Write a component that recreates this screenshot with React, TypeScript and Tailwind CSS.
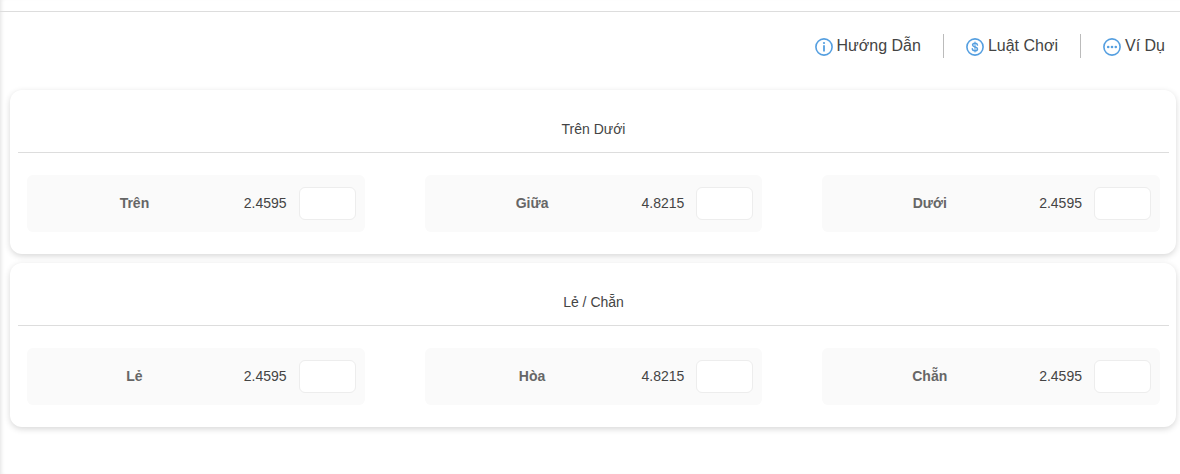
import { useState } from "react";
import type { ReactNode } from "react";

interface Bet {
  id: string;
  label: string;
  odds: string;
}

interface BetGroup {
  title: string;
  bets: Bet[];
}

const groups: BetGroup[] = [
  {
    title: "Trên Dưới",
    bets: [
      { id: "top", label: "Trên", odds: "2.4595" },
      { id: "middle", label: "Giữa", odds: "4.8215" },
      { id: "bottom", label: "Dưới", odds: "2.4595" },
    ],
  },
  {
    title: "Lẻ / Chẵn",
    bets: [
      { id: "odd", label: "Lẻ", odds: "2.4595" },
      { id: "tie", label: "Hòa", odds: "4.8215" },
      { id: "even", label: "Chẵn", odds: "2.4595" },
    ],
  },
];

function CircleIcon({ children }: { children: ReactNode }) {
  return (
    <svg
      className="mt-0.5 h-[18px] w-[18px] shrink-0 text-[#559fe0]"
      viewBox="0 0 18 18"
      fill="none"
      stroke="currentColor"
      strokeLinecap="round"
      strokeLinejoin="round"
      aria-hidden="true"
    >
      <circle cx="9" cy="9" r="8.1" strokeWidth="1.6" />
      {children}
    </svg>
  );
}

const links = [
  {
    label: "Hướng Dẫn",
    icon: (
      <CircleIcon>
        <circle cx="9" cy="5" r="1.1" fill="currentColor" stroke="none" />
        <path d="M9 7.2v6.3" strokeWidth="1.8" strokeLinecap="butt" />
      </CircleIcon>
    ),
  },
  {
    label: "Luật Chơi",
    icon: (
      <CircleIcon>
        <path
          d="M11.5 7.1C11.3 5.9 10.3 5.3 9 5.3c-1.4 0-2.4.7-2.4 1.8 0 2.5 4.9 1.3 4.9 3.8 0 1.1-1.1 1.8-2.5 1.8-1.5 0-2.5-.7-2.7-1.9"
          strokeWidth="1.5"
        />
        <path d="M9 4v10" strokeWidth="1" />
      </CircleIcon>
    ),
  },
  {
    label: "Ví Dụ",
    icon: (
      <CircleIcon>
        <g fill="currentColor" stroke="none">
          <circle cx="5.2" cy="9" r="1.3" />
          <circle cx="9" cy="9" r="1.3" />
          <circle cx="12.8" cy="9" r="1.3" />
        </g>
      </CircleIcon>
    ),
  },
];

function BetCell({ bet }: { bet: Bet }) {
  const [amount, setAmount] = useState("");

  return (
    <div className="flex items-center rounded-md bg-[#fafafa] py-3 pr-[9px]">
      <label
        htmlFor={bet.id}
        className="flex-1 pr-0.5 pb-0.5 text-center text-sm leading-5 font-bold text-[#666]"
      >
        {bet.label}
      </label>
      <span className="mr-3 pb-0.5 text-sm leading-5 text-[#444]">{bet.odds}</span>
      <input
        id={bet.id}
        type="text"
        inputMode="numeric"
        value={amount}
        onChange={(e) => setAmount(e.target.value)}
        className="h-[33px] w-[57px] rounded-md border border-[#ededed] bg-white px-1 text-center text-sm outline-none focus:border-[#559fe0]"
      />
    </div>
  );
}

export default function App() {
  return (
    <div className="min-h-screen bg-white pt-[11px] font-['Liberation_Sans',Arial,sans-serif] text-[#444] shadow-[inset_4px_0_4px_-3px_rgba(0,0,0,0.12)]">
      <header className="flex justify-end border-t border-[#ddd] pt-[22px] pr-[15px]">
        <nav className="flex divide-x divide-[#bbb]">
          {links.map((link) => (
            <a
              key={link.label}
              href="#"
              className="flex h-6 items-center gap-1 px-[22px] text-base leading-6 last:pr-0"
            >
              {link.icon}
              {link.label}
            </a>
          ))}
        </nav>
      </header>

      {/* Bet groups */}
      <main className="flex flex-col gap-[9px] pt-8 pr-1 pb-8 pl-[10px]">
        {groups.map((group) => (
          <section
            key={group.title}
            className="rounded-xl bg-white pr-[7px] pl-2 shadow-[0_2px_6px_rgba(0,0,0,0.16)]"
          >
            <h2 className="border-b border-[#ddd] pt-[29px] pb-[13px] text-center text-sm leading-5">
              {group.title}
            </h2>
            <div className="grid grid-cols-3 gap-[60px] px-[9px] py-[22px]">
              {group.bets.map((bet) => (
                <BetCell key={bet.id} bet={bet} />
              ))}
            </div>
          </section>
        ))}
      </main>
    </div>
  );
}
